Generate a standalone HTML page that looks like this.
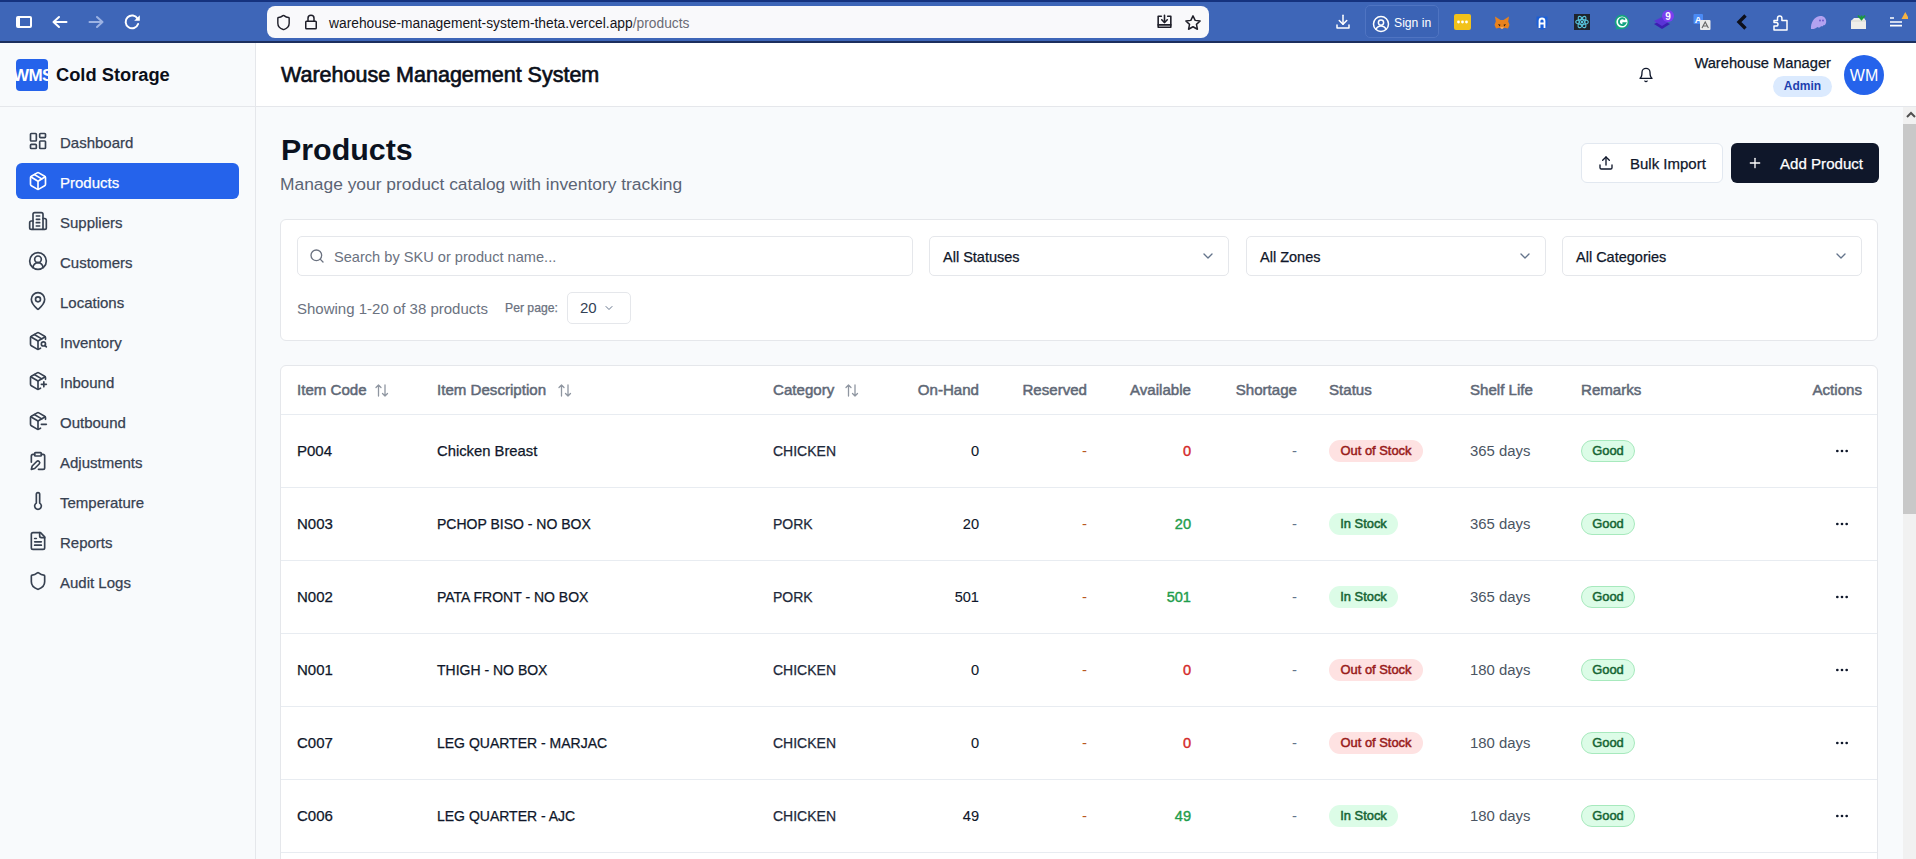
<!DOCTYPE html>
<html><head><meta charset="utf-8"><style>
*{box-sizing:border-box;margin:0;padding:0}
html,body{width:1916px;height:859px;overflow:hidden;background:#f8fafc;font-family:"Liberation Sans",sans-serif;color:#0f172a}
.a{position:absolute}
svg{display:block;position:absolute}
.ic{fill:none;stroke:currentColor;stroke-width:2;stroke-linecap:round;stroke-linejoin:round}
.t{position:absolute;white-space:nowrap;line-height:20px;height:20px}
.m{-webkit-text-stroke:0.25px currentColor}
#chrome{position:absolute;z-index:5;left:0;top:0;width:1916px;height:43px;background:#3e66b8;border-top:2px solid #15327e;border-bottom:2px solid #1c2f5e}
#url{position:absolute;left:267px;top:4px;width:942px;height:32px;background:#f9f9fb;border-radius:8px}
#side{position:absolute;left:0;top:42px;width:256px;height:817px;background:#f8fafc;border-right:1px solid #e5e7eb}
#sidehead{position:absolute;left:0;top:0;width:255px;height:65px;border-bottom:1px solid #e5e7eb}
.nav{position:absolute;left:16px;width:223px;height:36px;border-radius:6px;color:#374151}
.nav svg{left:12px;top:8px}
.nav span{position:absolute;left:44px;top:1.5px;line-height:36px;font-size:15px;white-space:nowrap}
.nav.act{background:#2563eb;color:#fff}
#head{position:absolute;left:256px;top:42px;width:1660px;height:65px;background:#fff;border-bottom:1px solid #e5e7eb}
.card{position:absolute;background:#fff;border:1px solid #e5e7eb;border-radius:6px}
.inp{position:absolute;background:#fff;border:1px solid #e5e7eb;border-radius:5px}
.btn{position:absolute;border-radius:6px}
.th{position:absolute;top:-1px;height:49px;line-height:49px;font-size:15.1px;font-weight:400;color:#606876;white-space:nowrap;-webkit-text-stroke:0.5px #606876}
.row{position:absolute;left:0;width:1596px;height:73px;border-bottom:1px solid #e8ecf1}
.td{position:absolute;top:0;height:72px;line-height:72px;font-size:14.9px;white-space:nowrap}
.badge{position:absolute;top:25px;height:22px;line-height:22px;border-radius:11px;font-size:12.9px;font-weight:400;text-align:center;-webkit-text-stroke:0.5px currentColor}
.oos{background:#fee2e2;color:#991b1b}
.ins{background:#dcfce7;color:#166534}
.good{background:#dcfce7;color:#166534;border:1px solid #a7e9bd;line-height:20px}
</style></head><body>
<div id="chrome">
<div class="a" style="left:16px;top:14px;width:16px;height:12px;border:2.5px solid #fff;border-left-width:4px;border-radius:2px"></div>
<svg style="left:50px;top:10px" width="20" height="20" viewBox="0 0 20 20"><path d="M3.5 10H16.5M9 5L3.5 10L9 15" fill="none" stroke="#fff" stroke-width="2" stroke-linecap="round" stroke-linejoin="round"/></svg>
<svg style="left:86px;top:10px" width="20" height="20" viewBox="0 0 20 20"><path d="M3.5 10H16.5M11 5L16.5 10L11 15" fill="none" stroke="#9db3e3" stroke-width="2" stroke-linecap="round" stroke-linejoin="round"/></svg>
<svg style="left:122px;top:10px" width="20" height="20" viewBox="0 0 20 20"><path d="M15.6 6.7A6.4 6.4 0 1 0 16.1 12" fill="none" stroke="#fff" stroke-width="2" stroke-linecap="round"/><path d="M17.8 3.2V8.8H12.2Z" fill="#fff"/></svg>
<div id="url">
<svg class="ic" style="left:7.5px;top:8px;color:#1f1f29;" width="17" height="17" viewBox="0 0 24 24" stroke-width="1.8"><path d="M20 13c0 5-3.5 7.5-7.66 8.95a1 1 0 0 1-.67-.01C7.5 20.5 4 18 4 13V6a1 1 0 0 1 1-1c2 0 4.5-1.2 6.24-2.72a1.17 1.17 0 0 1 1.52 0C14.51 3.81 17 5 19 5a1 1 0 0 1 1 1z"/></svg>
<svg class="ic" style="left:35px;top:7px;color:#1f1f29;" width="18" height="18" viewBox="0 0 24 24" stroke-width="1.8"><rect width="14" height="10" x="5" y="11" rx="1"/><path d="M8 11V7a4 4 0 0 1 8 0v4"/></svg>
<div class="t" style="left:62px;top:8px;font-size:13.8px;color:#15141a">warehouse-management-system-theta.vercel.app<span style="color:#6b6b75">/products</span></div>
<svg class="ic" style="left:888px;top:7px;color:#1f1f29;" width="19" height="19" viewBox="0 0 24 24" stroke-width="1.9"><path d="M4 4h4M16 4h4v14H4V4"/><path d="M12 3v9"/><path d="m8.5 8.5 3.5 3.5 3.5-3.5"/><path d="M4 15h16"/></svg>
<svg class="ic" style="left:917px;top:7.5px;color:#1f1f29;" width="18" height="18" viewBox="0 0 24 24" stroke-width="1.7"><path d="M12 2.5l2.9 6 6.6.8-4.9 4.5 1.3 6.5L12 17l-5.9 3.3 1.3-6.5L2.5 9.3l6.6-.8z"/></svg>
</div>
<svg class="ic" style="left:1334px;top:11px;color:#fff;" width="18" height="18" viewBox="0 0 24 24" stroke-width="1.8"><path d="M12 3v12"/><path d="m7 10 5 5 5-5"/><path d="M4 16v4h16v-4"/></svg>
<div class="a" style="left:1365px;top:3px;width:74px;height:33px;border-radius:5px;background:#3b63b5;border:1px solid #4f74c2"></div>
<svg class="ic" style="left:1372px;top:13px;color:#fff;" width="18" height="18" viewBox="0 0 24 24" stroke-width="2"><circle cx="12" cy="12" r="10"/><circle cx="12" cy="10" r="3.5"/><path d="M5.5 19a7 7 0 0 1 13 0"/></svg>
<div class="t" style="left:1394px;top:11px;font-size:12.2px;color:#fff">Sign in</div>
<div class="a" style="left:1454px;top:12px;width:16.5px;height:16px;background:#f2c21b;border-radius:2px"></div>
<svg style="left:1454px;top:12px" width="17" height="16" viewBox="0 0 17 16"><circle cx="4.5" cy="8" r="1.4" fill="#fff"/><circle cx="8.5" cy="8" r="1.4" fill="#fff"/><circle cx="12.5" cy="8" r="1.4" fill="#fff"/></svg>
<svg style="left:1494px;top:14px" width="16" height="14" viewBox="0 0 16 14"><path d="M1 0.5l5.5 3.5h3L15 0.5l-0.8 5 1.3 3.2-1.5 3.8-3.5-.8L8 13l-2.5-1.3-3.5.8L0.5 8.7 1.8 5.5z" fill="#e8821e"/><path d="M4 8l2.5.8-.8 1.8zM12 8l-2.5.8.8 1.8z" fill="#2d1b0e"/><path d="M6 11.5h4l-2 1.2z" fill="#f5d0b0"/></svg>
<svg style="left:1536px;top:13.5px" width="12" height="14" viewBox="0 0 12 14"><path d="M0.5 0.5h11v7.5c0 3-3 5-5.5 5.8C3.5 13 0.5 11 0.5 8z" fill="#1a5fd6"/><path d="M3.5 12V5a2.5 2.5 0 0 1 5 0v7M3.5 7.5h5" fill="none" stroke="#fff" stroke-width="1.8"/></svg>
<div class="a" style="left:1574px;top:12px;width:16px;height:16px;background:#1f242c"></div>
<svg style="left:1574px;top:12px" width="16" height="16" viewBox="0 0 16 16"><g fill="none" stroke="#58c4dc" stroke-width="1.1"><ellipse cx="8" cy="8" rx="6.3" ry="2.4"/><ellipse cx="8" cy="8" rx="6.3" ry="2.4" transform="rotate(60 8 8)"/><ellipse cx="8" cy="8" rx="6.3" ry="2.4" transform="rotate(120 8 8)"/></g><circle cx="8" cy="8" r="1.3" fill="#58c4dc"/></svg>
<svg style="left:1614px;top:12px" width="16" height="16" viewBox="0 0 16 16"><path d="M8 0.8a7.2 7.2 0 1 1 0 14.4H1.2l1.6-2.2A7.2 7.2 0 0 1 8 0.8z" fill="#14a37f"/><circle cx="8" cy="8" r="5.6" fill="#fff"/><path d="M11 5.6A3.4 3.4 0 1 0 11.4 9.2H8.4" fill="none" stroke="#14a37f" stroke-width="1.9"/></svg>
<svg style="left:1653px;top:8px" width="22" height="20" viewBox="0 0 22 20"><path d="M1 14l8-4 8 4-8 5z" fill="#3b1fb0"/><path d="M1 11l8-4 8 4-8 5z" fill="#5a34d6"/><circle cx="15" cy="6" r="6" fill="#7a3ff0"/><text x="15" y="9.6" font-size="10" font-weight="700" fill="#fff" text-anchor="middle" font-family="Liberation Sans">9</text></svg>
<svg style="left:1693px;top:12px" width="18" height="16" viewBox="0 0 18 16"><rect x="0.5" y="0" width="9.5" height="10" rx="1" fill="#4b8bf5"/><text x="5.2" y="8.6" font-size="9.5" font-weight="700" fill="#fff" text-anchor="middle" font-family="Liberation Sans">A</text><rect x="7" y="6" width="10.5" height="10" rx="1" fill="#e9e9e9"/><path d="M9 14l3.2-6 3.2 6M10.2 12h4" fill="none" stroke="#666" stroke-width="1.1"/></svg>
<svg style="left:1736px;top:12px" width="12" height="16" viewBox="0 0 12 16"><path d="M9.5 1.5L3 8l6.5 6.5" fill="none" stroke="#0d0f1a" stroke-width="3.4"/></svg>
<svg style="left:1773px;top:11.5px" width="15" height="17" viewBox="0 0 15 17"><path d="M1 6.5h3.5V4.2a2.2 2.2 0 0 1 4.4 0v2.3H14V16H1v-4h2.2a1.8 1.8 0 0 0 0-3.6H1z" fill="none" stroke="#fff" stroke-width="1.5" stroke-linejoin="round"/></svg>
<svg style="left:1810px;top:13px" width="17" height="15" viewBox="0 0 17 15"><path d="M1 14C0.5 8 4 1.5 10 1c4-.3 6.5 2.5 6.2 6-.3 2.5-1.5 3.5-2.6 3-.6 1.6-1.8 1.8-2.6 1-.8 1.8-2.5 2-3.5 1-1.5 1.5-4 2.3-6.5 2z" fill="#b3a2f0"/><circle cx="10" cy="5.5" r=".9" fill="#6a54c8"/><circle cx="13" cy="5.5" r=".9" fill="#6a54c8"/></svg>
<svg style="left:1850px;top:11.5px" width="17" height="16" viewBox="0 0 17 16"><path d="M1 7l3-3h10l2 3v8H1z" fill="#eeeeea"/><path d="M1 7h15" stroke="#d7d7d0" stroke-width="1"/><path d="M8 1.5l3.5 4 3.5-4M11.5 5.5v-4" fill="none" stroke="#1b9a3c" stroke-width="1.8"/></svg>
<svg style="left:1888px;top:9px" width="20" height="18" viewBox="0 0 20 18"><path d="M2 7h4M2 11h12M2 14.6h12" stroke="#fff" stroke-width="1.6"/><path d="M13.5 8l3.8-7 3.8 7z" fill="#f5b342"/></svg>
</div>
<div id="side"><div id="sidehead"></div>
<div class="a" style="left:16px;top:17px;width:32px;height:32px;background:#2563eb;border-radius:4px;overflow:hidden"><div class="t" style="left:-3px;top:7px;font-size:17px;font-weight:700;color:#fff;letter-spacing:-0.6px">WMS</div></div>
<div class="t" style="left:56px;top:23px;font-size:18.3px;font-weight:700;color:#0b0f19">Cold Storage</div>
<div class="nav" style="top:81px"><svg class="ic" style="left:12px;top:8px;" width="20" height="20" viewBox="0 0 24 24" stroke-width="2"><rect width="7" height="9" x="3" y="3" rx="1"/><rect width="7" height="5" x="14" y="3" rx="1"/><rect width="7" height="9" x="14" y="12" rx="1"/><rect width="7" height="5" x="3" y="16" rx="1"/></svg><span class="m">Dashboard</span></div>
<div class="nav act" style="top:121px"><svg class="ic" style="left:12px;top:8px;" width="20" height="20" viewBox="0 0 24 24" stroke-width="2"><path d="M11 21.73a2 2 0 0 0 2 0l7-4A2 2 0 0 0 21 16V8a2 2 0 0 0-1-1.73l-7-4a2 2 0 0 0-2 0l-7 4A2 2 0 0 0 3 8v8a2 2 0 0 0 1 1.73z"/><path d="M12 22V12"/><path d="m3.3 7 7.703 4.734a2 2 0 0 0 1.994 0L20.7 7"/><path d="m7.5 4.27 9 5.15"/></svg><span class="m">Products</span></div>
<div class="nav" style="top:161px"><svg class="ic" style="left:12px;top:8px;" width="20" height="20" viewBox="0 0 24 24" stroke-width="2"><path d="M6 22V4a2 2 0 0 1 2-2h8a2 2 0 0 1 2 2v18Z"/><path d="M6 12H4a2 2 0 0 0-2 2v6a2 2 0 0 0 2 2h2"/><path d="M18 9h2a2 2 0 0 1 2 2v9a2 2 0 0 1-2 2h-2"/><path d="M10 6h4"/><path d="M10 10h4"/><path d="M10 14h4"/><path d="M10 18h4"/></svg><span class="m">Suppliers</span></div>
<div class="nav" style="top:201px"><svg class="ic" style="left:12px;top:8px;" width="20" height="20" viewBox="0 0 24 24" stroke-width="2"><path d="M18 20a6 6 0 0 0-12 0"/><circle cx="12" cy="10" r="4"/><circle cx="12" cy="12" r="10"/></svg><span class="m">Customers</span></div>
<div class="nav" style="top:241px"><svg class="ic" style="left:12px;top:8px;" width="20" height="20" viewBox="0 0 24 24" stroke-width="2"><path d="M20 10c0 4.993-5.539 10.193-7.399 11.799a1 1 0 0 1-1.202 0C9.539 20.193 4 14.993 4 10a8 8 0 0 1 16 0"/><circle cx="12" cy="10" r="3"/></svg><span class="m">Locations</span></div>
<div class="nav" style="top:281px"><svg class="ic" style="left:12px;top:8px;" width="20" height="20" viewBox="0 0 24 24" stroke-width="2"><path d="M21 10V8a2 2 0 0 0-1-1.73l-7-4a2 2 0 0 0-2 0l-7 4A2 2 0 0 0 3 8v8a2 2 0 0 0 1 1.73l7 4a2 2 0 0 0 2 0l2-1.14"/><path d="m7.5 4.27 9 5.15"/><polyline points="3.29 7 12 12 20.71 7"/><line x1="12" x2="12" y1="22" y2="12"/><circle cx="18.5" cy="15.5" r="2.5"/><path d="M20.27 17.27 22 19"/></svg><span class="m">Inventory</span></div>
<div class="nav" style="top:321px"><svg class="ic" style="left:12px;top:8px;" width="20" height="20" viewBox="0 0 24 24" stroke-width="2"><path d="M21 10V8a2 2 0 0 0-1-1.73l-7-4a2 2 0 0 0-2 0l-7 4A2 2 0 0 0 3 8v8a2 2 0 0 0 1 1.73l7 4a2 2 0 0 0 2 0l2-1.14"/><path d="m7.5 4.27 9 5.15"/><polyline points="3.29 7 12 12 20.71 7"/><line x1="12" x2="12" y1="22" y2="12"/><path d="M16 16h6"/><path d="M19 13v6"/></svg><span class="m">Inbound</span></div>
<div class="nav" style="top:361px"><svg class="ic" style="left:12px;top:8px;" width="20" height="20" viewBox="0 0 24 24" stroke-width="2"><path d="M21 10V8a2 2 0 0 0-1-1.73l-7-4a2 2 0 0 0-2 0l-7 4A2 2 0 0 0 3 8v8a2 2 0 0 0 1 1.73l7 4a2 2 0 0 0 2 0l2-1.14"/><path d="m7.5 4.27 9 5.15"/><polyline points="3.29 7 12 12 20.71 7"/><line x1="12" x2="12" y1="22" y2="12"/><path d="M16 16h6"/></svg><span class="m">Outbound</span></div>
<div class="nav" style="top:401px"><svg class="ic" style="left:12px;top:8px;" width="20" height="20" viewBox="0 0 24 24" stroke-width="2"><rect width="8" height="4" x="8" y="2" rx="1"/><path d="M10.4 12.6a2 2 0 0 1 3 3L8 21l-4 1 1-4Z"/><path d="M16 4h2a2 2 0 0 1 2 2v14a2 2 0 0 1-2 2h-5.5"/><path d="M4 13.5V6a2 2 0 0 1 2-2h2"/></svg><span class="m">Adjustments</span></div>
<div class="nav" style="top:441px"><svg class="ic" style="left:12px;top:8px;" width="20" height="20" viewBox="0 0 24 24" stroke-width="2"><path d="M14 4v10.54a4 4 0 1 1-4 0V4a2 2 0 0 1 4 0Z"/></svg><span class="m">Temperature</span></div>
<div class="nav" style="top:481px"><svg class="ic" style="left:12px;top:8px;" width="20" height="20" viewBox="0 0 24 24" stroke-width="2"><path d="M15 2H6a2 2 0 0 0-2 2v16a2 2 0 0 0 2 2h12a2 2 0 0 0 2-2V7Z"/><path d="M14 2v4a2 2 0 0 0 2 2h4"/><path d="M10 9H8"/><path d="M16 13H8"/><path d="M16 17H8"/></svg><span class="m">Reports</span></div>
<div class="nav" style="top:521px"><svg class="ic" style="left:12px;top:8px;" width="20" height="20" viewBox="0 0 24 24" stroke-width="2"><path d="M20 13c0 5-3.5 7.5-7.66 8.95a1 1 0 0 1-.67-.01C7.5 20.5 4 18 4 13V6a1 1 0 0 1 1-1c2 0 4.5-1.2 6.24-2.72a1.17 1.17 0 0 1 1.52 0C14.51 3.81 17 5 19 5a1 1 0 0 1 1 1z"/></svg><span class="m">Audit Logs</span></div>
</div>
<div id="head">
<div class="t" style="left:25px;top:23px;font-size:21.5px;font-weight:400;color:#0b0f19;-webkit-text-stroke:0.65px #0b0f19">Warehouse Management System</div>
<svg class="ic" style="left:1382px;top:25px;color:#0f172a;" width="16" height="16" viewBox="0 0 24 24" stroke-width="2"><path d="M6 8a6 6 0 0 1 12 0c0 7 3 9 3 9H3s3-2 3-9"/><path d="M10.3 21a1.94 1.94 0 0 0 3.4 0"/></svg>
<div class="t m" style="right:85px;top:11px;font-size:14.7px;color:#0f172a;text-align:right">Warehouse Manager</div>
<div class="a" style="left:1517px;top:34px;width:59px;height:21px;border-radius:11px;background:#dbeafe"></div>
<div class="t" style="left:1517px;top:34px;width:59px;text-align:center;font-size:12px;font-weight:700;color:#1e40af">Admin</div>
<div class="a" style="left:1588px;top:13px;width:40px;height:40px;border-radius:20px;background:#2563eb"></div>
<div class="t" style="left:1588px;top:24px;width:40px;text-align:center;font-size:16px;color:#fff">WM</div>
</div>
<div class="t" style="left:281px;top:136px;font-size:30.4px;color:#0b1220;font-weight:700;line-height:26px;height:26px">Products</div>
<div class="t" style="left:280px;top:174px;font-size:17.4px;color:#5b6474;font-weight:400;">Manage your product catalog with inventory tracking</div>
<div class="btn" style="left:1581px;top:143px;width:142px;height:40px;background:#fff;border:1px solid #e2e8f0"></div>
<svg class="ic" style="left:1598px;top:155px;color:#0f172a;" width="16" height="16" viewBox="0 0 24 24" stroke-width="2"><path d="M21 15v4a2 2 0 0 1-2 2H5a2 2 0 0 1-2-2v-4"/><polyline points="17 8 12 3 7 8"/><line x1="12" x2="12" y1="3" y2="15"/></svg>
<div class="t m" style="left:1630px;top:154px;font-size:15px;color:#0f172a;font-weight:400;">Bulk Import</div>
<div class="btn" style="left:1731px;top:143px;width:148px;height:40px;background:#0f172a"></div>
<svg class="ic" style="left:1747px;top:155px;color:#fff;" width="16" height="16" viewBox="0 0 24 24" stroke-width="1.9"><path d="M5 12h14"/><path d="M12 5v14"/></svg>
<div class="t" style="left:1780px;top:154px;font-size:15.1px;color:#fff;font-weight:400;-webkit-text-stroke:0.25px #fff">Add Product</div>
<div class="card" style="left:280px;top:219px;width:1598px;height:122px"></div>
<div class="inp" style="left:297px;top:236px;width:616px;height:40px"></div>
<svg class="ic" style="left:309px;top:248px;color:#6b7280;" width="16" height="16" viewBox="0 0 24 24" stroke-width="1.9"><circle cx="11" cy="11" r="8"/><path d="m21 21-4.3-4.3"/></svg>
<div class="t" style="left:334px;top:247px;font-size:14.6px;color:#6b7280;font-weight:400;">Search by SKU or product name...</div>
<div class="inp" style="left:929px;top:236px;width:300px;height:40px"></div>
<div class="t m" style="left:943px;top:247px;font-size:14.5px;color:#0f172a;font-weight:400;">All Statuses</div>
<svg class="ic" style="left:1200px;top:248px;color:#64748b;" width="16" height="16" viewBox="0 0 24 24" stroke-width="2"><path d="m6 9 6 6 6-6"/></svg>
<div class="inp" style="left:1246px;top:236px;width:300px;height:40px"></div>
<div class="t m" style="left:1260px;top:247px;font-size:14.5px;color:#0f172a;font-weight:400;">All Zones</div>
<svg class="ic" style="left:1517px;top:248px;color:#64748b;" width="16" height="16" viewBox="0 0 24 24" stroke-width="2"><path d="m6 9 6 6 6-6"/></svg>
<div class="inp" style="left:1562px;top:236px;width:300px;height:40px"></div>
<div class="t m" style="left:1576px;top:247px;font-size:14.5px;color:#0f172a;font-weight:400;">All Categories</div>
<svg class="ic" style="left:1833px;top:248px;color:#64748b;" width="16" height="16" viewBox="0 0 24 24" stroke-width="2"><path d="m6 9 6 6 6-6"/></svg>
<div class="t" style="left:297px;top:299px;font-size:15px;color:#6b7280;font-weight:400;">Showing 1-20 of 38 products</div>
<div class="t m" style="left:505px;top:298px;font-size:12.2px;color:#6b7280;font-weight:400;">Per page:</div>
<div class="inp" style="left:567px;top:292px;width:64px;height:32px"></div>
<div class="t" style="left:580px;top:298px;font-size:15px;color:#334155;font-weight:400;">20</div>
<svg class="ic" style="left:603px;top:302px;color:#64748b;" width="12" height="12" viewBox="0 0 24 24" stroke-width="2"><path d="m6 9 6 6 6-6"/></svg>
<div class="card" style="left:280px;top:365px;width:1598px;height:520px;overflow:hidden">
<div class="a" style="left:0;top:0;width:1596px;height:49px;border-bottom:1px solid #e8ecf1"></div>
<div class="th" style="left:16px;">Item Code</div>
<svg style="left:94px;top:18px" width="14" height="13" viewBox="0 0 14 13"><path d="M3.5 12V1M1 3.5L3.5 1L6 3.5M10 1V12M7.5 9.5L10 12L12.5 9.5" fill="none" stroke="#8f96a1" stroke-width="1.3" stroke-linecap="round" stroke-linejoin="round"/></svg>
<div class="th" style="left:156px;">Item Description</div>
<svg style="left:277px;top:18px" width="14" height="13" viewBox="0 0 14 13"><path d="M3.5 12V1M1 3.5L3.5 1L6 3.5M10 1V12M7.5 9.5L10 12L12.5 9.5" fill="none" stroke="#8f96a1" stroke-width="1.3" stroke-linecap="round" stroke-linejoin="round"/></svg>
<div class="th" style="left:492px;">Category</div>
<svg style="left:564px;top:18px" width="14" height="13" viewBox="0 0 14 13"><path d="M3.5 12V1M1 3.5L3.5 1L6 3.5M10 1V12M7.5 9.5L10 12L12.5 9.5" fill="none" stroke="#8f96a1" stroke-width="1.3" stroke-linecap="round" stroke-linejoin="round"/></svg>
<div class="th" style="right:898px;text-align:right;">On-Hand</div>
<div class="th" style="right:790px;text-align:right;">Reserved</div>
<div class="th" style="right:686px;text-align:right;">Available</div>
<div class="th" style="right:580px;text-align:right;">Shortage</div>
<div class="th" style="left:1048px;">Status</div>
<div class="th" style="left:1189px;">Shelf Life</div>
<div class="th" style="left:1300px;">Remarks</div>
<div class="th" style="right:15px;text-align:right;">Actions</div>
<div class="row" style="top:49px">
<div class="td m" style="left:16px;font-size:15px">P004</div>
<div class="td m" style="left:156px;font-size:14.8px">Chicken Breast</div>
<div class="td m" style="left:492px;color:#1e293b;font-size:14px">CHICKEN</div>
<div class="td" style="right:898px;font-size:14.6px;-webkit-text-stroke:0.12px #0f172a">0</div>
<div class="td" style="right:790px;color:#b8581f">-</div>
<div class="td" style="right:686px;color:#d42a2a;font-size:14.6px;-webkit-text-stroke:0.4px #d42a2a">0</div>
<div class="td" style="right:580px;color:#64748b">-</div>
<div class="badge oos" style="left:1048px;width:94px">Out of Stock</div>
<div class="td" style="left:1189px;color:#4b5563">365 days</div>
<div class="badge good" style="left:1300px;width:54px">Good</div>
<svg style="left:1553px;top:28px" width="16" height="16" viewBox="0 0 24 24"><circle cx="5" cy="12" r="2" fill="#0f172a"/><circle cx="12" cy="12" r="2" fill="#0f172a"/><circle cx="19" cy="12" r="2" fill="#0f172a"/></svg>
</div>
<div class="row" style="top:122px">
<div class="td m" style="left:16px;font-size:15px">N003</div>
<div class="td m" style="left:156px;font-size:14.0px">PCHOP BISO - NO BOX</div>
<div class="td m" style="left:492px;color:#1e293b;font-size:14px">PORK</div>
<div class="td" style="right:898px;font-size:14.6px;-webkit-text-stroke:0.12px #0f172a">20</div>
<div class="td" style="right:790px;color:#b8581f">-</div>
<div class="td" style="right:686px;color:#1f9d4c;font-size:14.6px;-webkit-text-stroke:0.4px #1f9d4c">20</div>
<div class="td" style="right:580px;color:#64748b">-</div>
<div class="badge ins" style="left:1048px;width:69px">In Stock</div>
<div class="td" style="left:1189px;color:#4b5563">365 days</div>
<div class="badge good" style="left:1300px;width:54px">Good</div>
<svg style="left:1553px;top:28px" width="16" height="16" viewBox="0 0 24 24"><circle cx="5" cy="12" r="2" fill="#0f172a"/><circle cx="12" cy="12" r="2" fill="#0f172a"/><circle cx="19" cy="12" r="2" fill="#0f172a"/></svg>
</div>
<div class="row" style="top:195px">
<div class="td m" style="left:16px;font-size:15px">N002</div>
<div class="td m" style="left:156px;font-size:14.0px">PATA FRONT - NO BOX</div>
<div class="td m" style="left:492px;color:#1e293b;font-size:14px">PORK</div>
<div class="td" style="right:898px;font-size:14.6px;-webkit-text-stroke:0.12px #0f172a">501</div>
<div class="td" style="right:790px;color:#b8581f">-</div>
<div class="td" style="right:686px;color:#1f9d4c;font-size:14.6px;-webkit-text-stroke:0.4px #1f9d4c">501</div>
<div class="td" style="right:580px;color:#64748b">-</div>
<div class="badge ins" style="left:1048px;width:69px">In Stock</div>
<div class="td" style="left:1189px;color:#4b5563">365 days</div>
<div class="badge good" style="left:1300px;width:54px">Good</div>
<svg style="left:1553px;top:28px" width="16" height="16" viewBox="0 0 24 24"><circle cx="5" cy="12" r="2" fill="#0f172a"/><circle cx="12" cy="12" r="2" fill="#0f172a"/><circle cx="19" cy="12" r="2" fill="#0f172a"/></svg>
</div>
<div class="row" style="top:268px">
<div class="td m" style="left:16px;font-size:15px">N001</div>
<div class="td m" style="left:156px;font-size:14.0px">THIGH - NO BOX</div>
<div class="td m" style="left:492px;color:#1e293b;font-size:14px">CHICKEN</div>
<div class="td" style="right:898px;font-size:14.6px;-webkit-text-stroke:0.12px #0f172a">0</div>
<div class="td" style="right:790px;color:#b8581f">-</div>
<div class="td" style="right:686px;color:#d42a2a;font-size:14.6px;-webkit-text-stroke:0.4px #d42a2a">0</div>
<div class="td" style="right:580px;color:#64748b">-</div>
<div class="badge oos" style="left:1048px;width:94px">Out of Stock</div>
<div class="td" style="left:1189px;color:#4b5563">180 days</div>
<div class="badge good" style="left:1300px;width:54px">Good</div>
<svg style="left:1553px;top:28px" width="16" height="16" viewBox="0 0 24 24"><circle cx="5" cy="12" r="2" fill="#0f172a"/><circle cx="12" cy="12" r="2" fill="#0f172a"/><circle cx="19" cy="12" r="2" fill="#0f172a"/></svg>
</div>
<div class="row" style="top:341px">
<div class="td m" style="left:16px;font-size:15px">C007</div>
<div class="td m" style="left:156px;font-size:14.0px">LEG QUARTER - MARJAC</div>
<div class="td m" style="left:492px;color:#1e293b;font-size:14px">CHICKEN</div>
<div class="td" style="right:898px;font-size:14.6px;-webkit-text-stroke:0.12px #0f172a">0</div>
<div class="td" style="right:790px;color:#b8581f">-</div>
<div class="td" style="right:686px;color:#d42a2a;font-size:14.6px;-webkit-text-stroke:0.4px #d42a2a">0</div>
<div class="td" style="right:580px;color:#64748b">-</div>
<div class="badge oos" style="left:1048px;width:94px">Out of Stock</div>
<div class="td" style="left:1189px;color:#4b5563">180 days</div>
<div class="badge good" style="left:1300px;width:54px">Good</div>
<svg style="left:1553px;top:28px" width="16" height="16" viewBox="0 0 24 24"><circle cx="5" cy="12" r="2" fill="#0f172a"/><circle cx="12" cy="12" r="2" fill="#0f172a"/><circle cx="19" cy="12" r="2" fill="#0f172a"/></svg>
</div>
<div class="row" style="top:414px">
<div class="td m" style="left:16px;font-size:15px">C006</div>
<div class="td m" style="left:156px;font-size:14.0px">LEG QUARTER - AJC</div>
<div class="td m" style="left:492px;color:#1e293b;font-size:14px">CHICKEN</div>
<div class="td" style="right:898px;font-size:14.6px;-webkit-text-stroke:0.12px #0f172a">49</div>
<div class="td" style="right:790px;color:#b8581f">-</div>
<div class="td" style="right:686px;color:#1f9d4c;font-size:14.6px;-webkit-text-stroke:0.4px #1f9d4c">49</div>
<div class="td" style="right:580px;color:#64748b">-</div>
<div class="badge ins" style="left:1048px;width:69px">In Stock</div>
<div class="td" style="left:1189px;color:#4b5563">180 days</div>
<div class="badge good" style="left:1300px;width:54px">Good</div>
<svg style="left:1553px;top:28px" width="16" height="16" viewBox="0 0 24 24"><circle cx="5" cy="12" r="2" fill="#0f172a"/><circle cx="12" cy="12" r="2" fill="#0f172a"/><circle cx="19" cy="12" r="2" fill="#0f172a"/></svg>
</div>
<div class="row" style="top:487px">
<div class="td m" style="left:16px;font-size:15px">C005</div>
<div class="td m" style="left:156px;font-size:14.0px">LEG QUARTER - TYSON</div>
<div class="td m" style="left:492px;color:#1e293b;font-size:14px">CHICKEN</div>
<div class="td" style="right:898px;font-size:14.6px;-webkit-text-stroke:0.12px #0f172a">0</div>
<div class="td" style="right:790px;color:#b8581f">-</div>
<div class="td" style="right:686px;color:#d42a2a;font-size:14.6px;-webkit-text-stroke:0.4px #d42a2a">0</div>
<div class="td" style="right:580px;color:#64748b">-</div>
<div class="badge oos" style="left:1048px;width:94px">Out of Stock</div>
<div class="td" style="left:1189px;color:#4b5563">180 days</div>
<div class="badge good" style="left:1300px;width:54px">Good</div>
<svg style="left:1553px;top:28px" width="16" height="16" viewBox="0 0 24 24"><circle cx="5" cy="12" r="2" fill="#0f172a"/><circle cx="12" cy="12" r="2" fill="#0f172a"/><circle cx="19" cy="12" r="2" fill="#0f172a"/></svg>
</div>
</div>
<div class="a" style="left:1903px;top:107px;width:13px;height:752px;background:#f1f1f1"></div>
<div class="a" style="left:1903px;top:124px;width:13px;height:390px;background:#c8c8c8"></div>
<svg style="left:1905px;top:109px" width="11" height="11" viewBox="0 0 11 11"><path d="M2 8l4-4 4 4" fill="none" stroke="#505050" stroke-width="2"/></svg>
</body></html>
